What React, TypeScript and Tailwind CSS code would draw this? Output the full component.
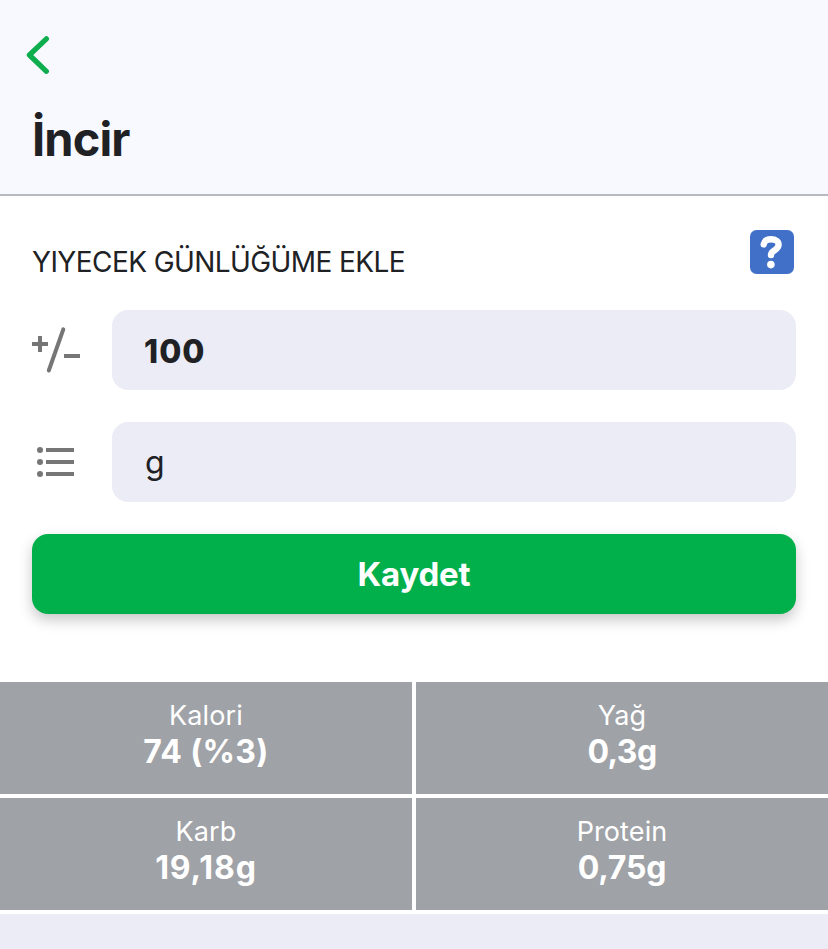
import React from 'react'

type Nutrient = {
  label: string
  value: string
  tracking: string
}

const nutrients: Nutrient[] = [
  { label: 'Kalori', value: '74 (%3)', tracking: 'tracking-[0.3px]' },
  { label: 'Yağ', value: '0,3g', tracking: 'tracking-[-0.6px]' },
  { label: 'Karb', value: '19,18g', tracking: 'tracking-[0.9px]' },
  { label: 'Protein', value: '0,75g', tracking: 'tracking-[-0.2px]' },
]

const BackIcon = () => (
  <svg width="24" height="40" viewBox="0 0 24 40" fill="none">
    <path
      d="M20.4 3.8L3.4 20L20.4 36.3"
      stroke="#0ead4e"
      strokeWidth="5.2"
      strokeLinecap="round"
      strokeLinejoin="round"
    />
  </svg>
)

const HelpIcon = () => (
  <svg width="44" height="44" viewBox="0 0 44 44" fill="none">
    <rect width="44" height="44" rx="6.5" fill="#4070c8" />
    <path
      d="M13.7 14.4C14.3 10.9 16.8 9.3 21.1 9.3C25.8 9.3 28.6 11.4 28.6 14.6C28.6 17.6 26.6 19.1 24.4 20.4C22 21.8 21 22.8 21 25.1"
      stroke="#fff"
      strokeWidth="6.4"
      strokeLinecap="round"
    />
    <circle cx="20.9" cy="34.6" r="3.8" fill="#fff" />
  </svg>
)

const PlusMinusIcon = () => (
  <svg width="48" height="48" viewBox="0 0 48 48" fill="none" stroke="#767676">
    <path d="M0 18H16M8 10V26M32 30H48" strokeWidth="4" />
    <path d="M31.3 3.4L16.8 44.5" strokeWidth="4" strokeLinecap="round" />
  </svg>
)

const ListIcon = () => (
  <svg width="48" height="48" viewBox="0 0 48 48" fill="#767676">
    <circle cx="8" cy="12" r="3" />
    <circle cx="8" cy="24" r="3" />
    <circle cx="8" cy="36" r="3" />
    <path d="M14 10h28v4H14zM14 22h28v4H14zM14 34h28v4H14z" />
  </svg>
)

const NutrientCell = ({ label, value, tracking }: Nutrient) => (
  <div className="h-28 bg-[#9fa2a7] pt-4 text-center text-white">
    <p className="text-[27px] leading-9 font-normal tracking-[0.1px]">
      {label}
    </p>
    <p className={`text-[32px] leading-9 font-bold ${tracking}`}>{value}</p>
  </div>
)

export default function App() {
  return (
    <div className="flex h-[949px] w-[828px] flex-col overflow-hidden bg-white font-['Inter','Liberation_Sans',sans-serif] text-[#202124]">
      <header className="h-[196px] shrink-0 border-b-2 border-[#b7b8c0] bg-[#f8f9ff] pt-[35px]">
        <button className="ml-[26px] block h-10" aria-label="Geri">
          <BackIcon />
        </button>
        <h1 className="mt-9 ml-8 text-[47px] leading-[56px] font-bold tracking-[-0.9px]">
          İncir
        </h1>
      </header>

      <main className="px-8 pt-[34px]">
        <div className="flex h-11 justify-between pr-0.5">
          <h2 className="pt-[13px] text-[28px] leading-[38px] tracking-[-0.58px] whitespace-nowrap">
            YIYECEK GÜNLÜĞÜME EKLE
          </h2>
          <button className="h-11" aria-label="Yardım">
            <HelpIcon />
          </button>
        </div>

        <div className="mt-9 flex items-center gap-8">
          <PlusMinusIcon />
          <div className="flex h-20 flex-1 items-center rounded-2xl bg-[#ebecf5] px-8 pt-1 text-[32px] font-extrabold tracking-[1px]">
            100
          </div>
        </div>

        <div className="mt-8 flex items-center gap-8">
          <ListIcon />
          <div className="flex h-20 flex-1 items-center rounded-2xl bg-[#ebecf5] pr-8 pl-[33px] pt-0.5 text-[32px]">
            g
          </div>
        </div>

        <button className="mt-8 h-20 w-full rounded-2xl bg-[#02b04b] pt-px text-[33px] font-bold tracking-[-0.2px] text-white shadow-[0_6px_14px_rgba(0,0,0,0.22)]">
          Kaydet
        </button>
      </main>

      <section className="mt-[68px] grid grid-cols-2 gap-1">
        {nutrients.map((nutrient) => (
          <NutrientCell key={nutrient.label} {...nutrient} />
        ))}
      </section>

      <footer className="mt-1 flex-1 bg-[#ebecf5]" />
    </div>
  )
}
